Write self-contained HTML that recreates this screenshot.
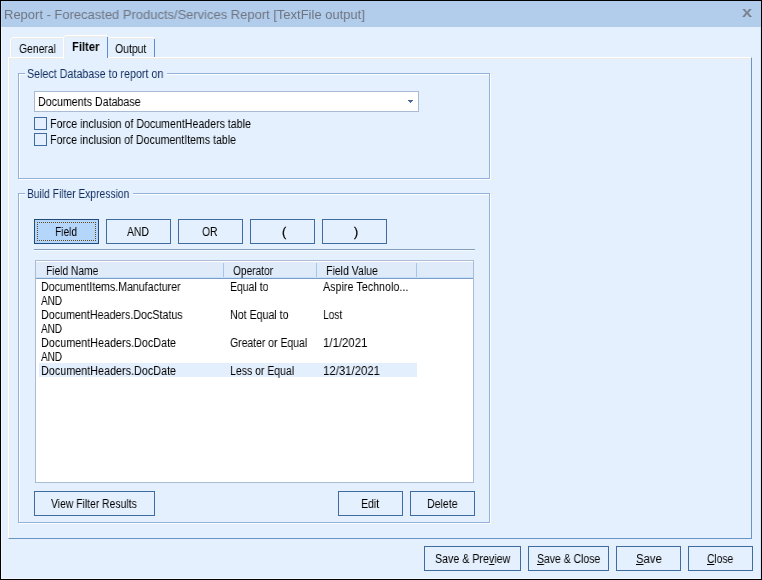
<!DOCTYPE html>
<html lang="en"><head><meta charset="utf-8"><title>Report - Forecasted Products/Services Report [TextFile output]</title>
<style>
html,body{margin:0;padding:0;}
body{width:762px;height:580px;overflow:hidden;background:#e4f0fd;position:relative;font-family:"Liberation Sans", Arial, sans-serif;}
.b{position:absolute;box-sizing:border-box;}
.t{will-change:transform;position:absolute;white-space:pre;line-height:1;transform-origin:0 0;color:#000;}
.t u{text-decoration:underline;text-underline-offset:1px;}
</style></head><body>
<div class="b window" style="left:0px;top:0px;width:762px;height:580px;background:#000;">
  <div class="b client" style="left:1px;top:1px;width:760px;height:578px;background:#e4f0fd;">
    <div class="b titlebar" style="left:0px;top:0px;width:760px;height:26px;background:#b1cdeb;">
      <div class="b" style="left:0px;top:0px;width:1px;height:26px;background:#bdd8f6;"></div>
      <span class="t title" style="left:2.56px;top:7px;font-size:13px;color:#6f7480;transform:scaleX(0.9966);">Report - Forecasted Products/Services Report [TextFile output]</span>
      <span class="t close" style="left:740.78px;top:2.88px;font-size:15.5px;color:#7b8290;font-weight:bold;transform:scaleX(1.1761);">x</span>
    </div>
    <div class="b" style="left:0px;top:26px;width:1px;height:552px;background:#f1f8ff;"></div>
    <div class="b" style="left:0px;top:577px;width:760px;height:1px;background:#f1f8ff;"></div>
    <div class="b" style="left:759px;top:26px;width:1px;height:552px;background:#d2e6ff;"></div>
    <div class="b tabpage" style="left:7px;top:56px;width:744px;height:482px;border:1px solid #6b93c6;border-left-color:#ffffff;border-top-color:#ffffff;">
      <div class="b" style="left:0px;top:0px;width:742px;height:1px;background:#efece8;"></div>
      <div class="b" style="left:0px;top:0px;width:1px;height:480px;background:#efece8;"></div>
    </div>
    <div class="b tabs" style="left:9px;top:34px;width:146px;height:24px;">
      <div class="b tab" style="left:0px;top:2px;width:53px;height:20px;">
        <div class="b" style="left:2px;top:0px;width:51px;height:1px;background:#ffffff;"></div>
        <div class="b" style="left:2px;top:1px;width:51px;height:1px;background:#efece8;"></div>
        <div class="b" style="left:0px;top:2px;width:1px;height:18px;background:#ffffff;"></div>
        <div class="b" style="left:1px;top:2px;width:1px;height:18px;background:#efece8;"></div>
        <div class="b" style="left:1px;top:1px;width:1px;height:1px;background:#ffffff;"></div>
        <span class="t" style="left:8.9px;top:6.22px;font-size:12.5px;transform:scaleX(0.8268);">General</span>
      </div>
      <div class="b tab" style="left:98px;top:2px;width:47px;height:20px;">
        <div class="b" style="left:1px;top:0px;width:45px;height:1px;background:#ffffff;"></div>
        <div class="b" style="left:1px;top:1px;width:45px;height:1px;background:#efece8;"></div>
        <div class="b" style="left:46px;top:2px;width:1px;height:18px;background:#5f8fca;"></div>
        <span class="t" style="left:7.17px;top:6.22px;font-size:12.5px;transform:scaleX(0.8357);">Output</span>
      </div>
      <div class="b tab selected" style="left:53px;top:0px;width:45px;height:24px;background:#e4f0fd;">
        <div class="b" style="left:2px;top:0px;width:42px;height:1px;background:#ffffff;"></div>
        <div class="b" style="left:2px;top:1px;width:42px;height:1px;background:#efece8;"></div>
        <div class="b" style="left:0px;top:2px;width:1px;height:22px;background:#ffffff;"></div>
        <div class="b" style="left:1px;top:2px;width:1px;height:22px;background:#efece8;"></div>
        <div class="b" style="left:1px;top:1px;width:1px;height:1px;background:#ffffff;"></div>
        <div class="b" style="left:44px;top:2px;width:1px;height:21px;background:#5f8fca;"></div>
        <span class="t" style="left:9px;top:6.22px;font-size:12.5px;font-weight:bold;transform:scaleX(0.8965);">Filter</span>
      </div>
    </div>
    <div class="b group" style="left:17px;top:72px;width:473px;height:107px;">
      <div class="b" style="left:1px;top:1px;width:472px;height:106px;border:1px solid #fff;"></div>
      <div class="b" style="left:0px;top:0px;width:472px;height:106px;border:1px solid #93b2da;"></div>
      <div class="b" style="left:7px;top:0px;width:142px;height:2px;background:#e4f0fd;"></div>
      <span class="t legend" style="left:8.78px;top:-4.78px;font-size:12.5px;color:#0e2c5e;transform:scaleX(0.8567);">Select Database to report on</span>
      <div class="b combo" style="left:16px;top:18px;width:385px;height:21px;border:1px solid #a9bbd4;background:#fff;">
        <span class="t" style="left:2.92px;top:4.22px;font-size:12.5px;transform:scaleX(0.8536);">Documents Database</span>
        <div class="b" style="left:373px;top:8px;width:5px;height:1px;background:#4f6080;"></div>
        <div class="b" style="left:374px;top:9px;width:3px;height:1px;background:#4a6cb4;"></div>
        <div class="b" style="left:375px;top:10px;width:1px;height:1px;background:#4a72c4;"></div>
      </div>
      <div class="b check" style="left:16px;top:44px;width:260px;height:13px;">
        <div class="b box" style="left:0px;top:0px;width:13px;height:13px;border:1px solid #3e6ca1;background:#e4f0fd;"></div>
        <span class="t" style="left:16.27px;top:1.22px;font-size:12.5px;transform:scaleX(0.8506);">Force inclusion of DocumentHeaders table</span>
      </div>
      <div class="b check" style="left:16px;top:60px;width:260px;height:13px;">
        <div class="b box" style="left:0px;top:0px;width:13px;height:13px;border:1px solid #3e6ca1;background:#e4f0fd;"></div>
        <span class="t" style="left:16.27px;top:1.22px;font-size:12.5px;transform:scaleX(0.8474);">Force inclusion of DocumentItems table</span>
      </div>
    </div>
    <div class="b group" style="left:17px;top:192px;width:473px;height:331px;">
      <div class="b" style="left:1px;top:1px;width:472px;height:330px;border:1px solid #fff;"></div>
      <div class="b" style="left:0px;top:0px;width:472px;height:330px;border:1px solid #93b2da;"></div>
      <div class="b" style="left:7px;top:0px;width:108px;height:2px;background:#e4f0fd;"></div>
      <span class="t legend" style="left:9.1px;top:-4.78px;font-size:12.5px;color:#0e2c5e;transform:scaleX(0.8220);">Build Filter Expression</span>
      <div class="b btn" style="left:16px;top:26px;width:65px;height:25px;border:1px solid #1f4a7c;background:#b5d6fb;">
        <div class="b focus" style="left:2px;top:2px;width:59px;height:19px;border:1px dotted #6b4a1a;"></div>
        <span class="t" style="left:20.27px;top:6.22px;font-size:12.5px;transform:scaleX(0.8112);">Field</span>
      </div>
      <div class="b btn" style="left:88px;top:26px;width:65px;height:25px;border:1px solid #3e6ca1;background:#e4f0fd;">
        <span class="t" style="left:20.17px;top:6.22px;font-size:12.5px;transform:scaleX(0.8359);">AND</span>
      </div>
      <div class="b btn" style="left:160px;top:26px;width:65px;height:25px;border:1px solid #3e6ca1;background:#e4f0fd;">
        <span class="t" style="left:23.42px;top:6.22px;font-size:12.5px;transform:scaleX(0.8273);">OR</span>
      </div>
      <div class="b btn" style="left:232px;top:26px;width:65px;height:25px;border:1px solid #3e6ca1;background:#e4f0fd;">
        <span class="t" style="left:30.62px;top:6.22px;font-size:12.5px;-webkit-text-stroke:0.3px #000;transform:scaleX(0.9972);">(</span>
      </div>
      <div class="b btn" style="left:304px;top:26px;width:65px;height:25px;border:1px solid #3e6ca1;background:#e4f0fd;">
        <span class="t" style="left:30.79px;top:6.22px;font-size:12.5px;-webkit-text-stroke:0.3px #000;transform:scaleX(0.9972);">)</span>
      </div>
      <div class="b" style="left:16px;top:56px;width:441px;height:1px;background:#839fbc;"></div>
      <div class="b" style="left:16px;top:57px;width:441px;height:1px;background:#f4f9ff;"></div>
      <div class="b list" style="left:17px;top:67px;width:439px;height:223px;border:1px solid #abbcd4;background:#fff;">
        <div class="b header" style="left:0px;top:0px;width:437px;height:18px;">
          <div class="b" style="left:0px;top:1px;width:437px;height:15px;background:#e0ebfa;"></div>
          <div class="b" style="left:0px;top:16px;width:437px;height:1px;background:#c8e1fb;"></div>
          <div class="b" style="left:0px;top:17px;width:437px;height:1px;background:#7c9dc6;"></div>
          <div class="b" style="left:187px;top:2px;width:1px;height:14px;background:#a4c5ee;"></div>
          <div class="b" style="left:280px;top:2px;width:1px;height:14px;background:#a4c5ee;"></div>
          <div class="b" style="left:380px;top:2px;width:1px;height:14px;background:#a4c5ee;"></div>
          <span class="t" style="left:9.92px;top:4.22px;font-size:12.5px;transform:scaleX(0.8183);">Field Name</span>
          <span class="t" style="left:197.22px;top:4.22px;font-size:12.5px;transform:scaleX(0.8109);">Operator</span>
          <span class="t" style="left:289.86px;top:4.22px;font-size:12.5px;transform:scaleX(0.8416);">Field Value</span>
        </div>
        <div class="b row" style="left:3px;top:18px;width:378px;height:14px;">
          <span class="t" style="left:2.07px;top:2.22px;font-size:12.5px;transform:scaleX(0.8480);">DocumentItems.Manufacturer</span>
          <span class="t" style="left:190.92px;top:2.22px;font-size:12.5px;transform:scaleX(0.8360);">Equal to</span>
          <span class="t" style="left:283.77px;top:2.22px;font-size:12.5px;transform:scaleX(0.8606);">Aspire Technolo...</span>
        </div>
        <div class="b row" style="left:3px;top:32px;width:378px;height:14px;">
          <span class="t" style="left:2.17px;top:2.22px;font-size:12.5px;transform:scaleX(0.8002);">AND</span>
        </div>
        <div class="b row" style="left:3px;top:46px;width:378px;height:14px;">
          <span class="t" style="left:2.06px;top:2.22px;font-size:12.5px;transform:scaleX(0.8569);">DocumentHeaders.DocStatus</span>
          <span class="t" style="left:190.82px;top:2.22px;font-size:12.5px;transform:scaleX(0.8521);">Not Equal to</span>
          <span class="t" style="left:283.87px;top:2.22px;font-size:12.5px;transform:scaleX(0.8098);">Lost</span>
        </div>
        <div class="b row" style="left:3px;top:60px;width:378px;height:14px;">
          <span class="t" style="left:2.17px;top:2.22px;font-size:12.5px;transform:scaleX(0.8002);">AND</span>
        </div>
        <div class="b row" style="left:3px;top:74px;width:378px;height:14px;">
          <span class="t" style="left:2.06px;top:2.22px;font-size:12.5px;transform:scaleX(0.8639);">DocumentHeaders.DocDate</span>
          <span class="t" style="left:191.3px;top:2.22px;font-size:12.5px;transform:scaleX(0.8343);">Greater or Equal</span>
          <span class="t" style="left:283.95px;top:2.22px;font-size:12.5px;transform:scaleX(0.9126);">1/1/2021</span>
        </div>
        <div class="b row" style="left:3px;top:88px;width:378px;height:14px;">
          <span class="t" style="left:2.17px;top:2.22px;font-size:12.5px;transform:scaleX(0.8002);">AND</span>
        </div>
        <div class="b row selected" style="left:3px;top:102px;width:378px;height:14px;background:#e4effd;">
          <span class="t" style="left:2.06px;top:2.22px;font-size:12.5px;transform:scaleX(0.8638);">DocumentHeaders.DocDate</span>
          <span class="t" style="left:190.92px;top:2.22px;font-size:12.5px;transform:scaleX(0.8383);">Less or Equal</span>
          <span class="t" style="left:283.95px;top:2.22px;font-size:12.5px;transform:scaleX(0.9107);">12/31/2021</span>
        </div>
      </div>
      <div class="b btn" style="left:16px;top:298px;width:121px;height:25px;border:1px solid #3e6ca1;background:#e4f0fd;">
        <span class="t" style="left:16.26px;top:6.22px;font-size:12.5px;transform:scaleX(0.8306);">View Filter Results</span>
      </div>
      <div class="b btn" style="left:320px;top:298px;width:65px;height:25px;border:1px solid #3e6ca1;background:#e4f0fd;">
        <span class="t" style="left:22.06px;top:6.22px;font-size:12.5px;transform:scaleX(0.8436);">Edit</span>
      </div>
      <div class="b btn" style="left:392px;top:298px;width:65px;height:25px;border:1px solid #3e6ca1;background:#e4f0fd;">
        <span class="t" style="left:16.26px;top:6.22px;font-size:12.5px;transform:scaleX(0.8454);">Delete</span>
      </div>
    </div>
    <div class="b btn" style="left:423px;top:545px;width:97px;height:25px;border:1px solid #3e6ca1;background:#e4f0fd;">
      <span class="t" style="left:10.21px;top:6.22px;font-size:12.5px;transform:scaleX(0.8534);">Save &amp; Pre<u>v</u>iew</span>
    </div>
    <div class="b btn" style="left:527px;top:545px;width:81px;height:25px;border:1px solid #3e6ca1;background:#e4f0fd;">
      <span class="t" style="left:7.94px;top:6.22px;font-size:12.5px;transform:scaleX(0.8348);"><u>S</u>ave &amp; Close</span>
    </div>
    <div class="b btn" style="left:615px;top:545px;width:65px;height:25px;border:1px solid #3e6ca1;background:#e4f0fd;">
      <span class="t" style="left:18.67px;top:6.22px;font-size:12.5px;transform:scaleX(0.9073);"><u>S</u>ave</span>
    </div>
    <div class="b btn" style="left:687px;top:545px;width:65px;height:25px;border:1px solid #3e6ca1;background:#e4f0fd;">
      <span class="t" style="left:17.78px;top:6.22px;font-size:12.5px;transform:scaleX(0.8197);"><u>C</u>lose</span>
    </div>
  </div>
</div>
</body></html>
